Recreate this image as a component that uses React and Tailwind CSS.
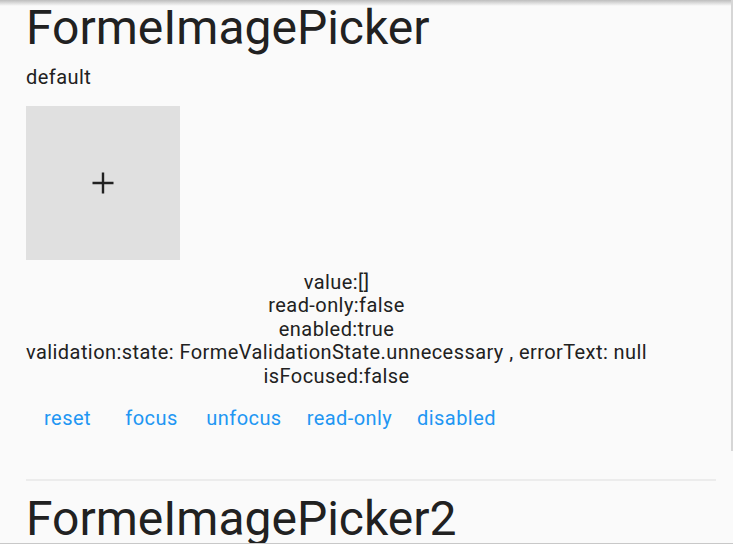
import React from 'react';

const info = [
  'value:[]',
  'read-only:false',
  'enabled:true',
  'validation:state: FormeValidationState.unnecessary , errorText: null',
  'isFocused:false',
];

const actions = [
  { label: 'reset', w: 'w-[83px]' },
  { label: 'focus', w: 'w-[85px]' },
  { label: 'unfocus', w: 'w-[100px]' },
  { label: 'read-only', w: 'w-[111px]' },
  { label: 'disabled', w: 'w-[103px]' },
];

function PlusIcon() {
  return (
    <svg width="24" height="24" viewBox="0 0 24 24" className="text-[#212121]">
      <path d="M12 1.5v21M1.5 12h21" stroke="currentColor" strokeWidth="2.4" fill="none" />
    </svg>
  );
}

export default function App() {
  return (
    <div className="relative h-[544px] w-[733px] overflow-hidden bg-[#fafafa] font-['Roboto',sans-serif] text-[#212121]">
      <div className="pl-[26px] pr-[17px]">
        <h1 className="text-[48px] leading-[56px] font-normal">FormeImagePicker</h1>
        <p className="mt-[10px] text-[20px] leading-[23.5px] tracking-[0.45px]">default</p>

        <button className="mt-[16.5px] flex h-[154px] w-[154px] items-center justify-center bg-[#e0e0e0]">
          <PlusIcon />
        </button>

        <div className="mt-[10.5px] flex w-fit flex-col items-center text-[20px] leading-[23.5px] tracking-[0.43px]">
          {info.map((line) => (
            <div key={line} className="whitespace-nowrap">{line}</div>
          ))}
        </div>

        <div className="mt-[4px] flex">
          {actions.map((a) => (
            <button
              key={a.label}
              className={`${a.w} flex h-[54px] items-center justify-center text-[20px] leading-[23.5px] tracking-[0.43px] text-[#2196f3]`}
            >
              {a.label}
            </button>
          ))}
        </div>

        <div className="mt-[33px] h-[2px] bg-[#ececec]" />

        <h1 className="mt-[10px] text-[48px] leading-[56px] font-normal">FormeImagePicker2</h1>
      </div>

      {/* edge shadows and scrollbar drawn over the content */}
      <div className="pointer-events-none absolute left-0 right-0 top-0 h-[6px] bg-gradient-to-b from-[#bdbdbd] to-transparent" />
      <div className="pointer-events-none absolute bottom-0 left-0 right-0 h-px bg-[#c8c8c8]" />
      <div className="pointer-events-none absolute right-0 top-0 h-[451px] w-[2px] bg-[#d6d6d6]" />
    </div>
  );
}
